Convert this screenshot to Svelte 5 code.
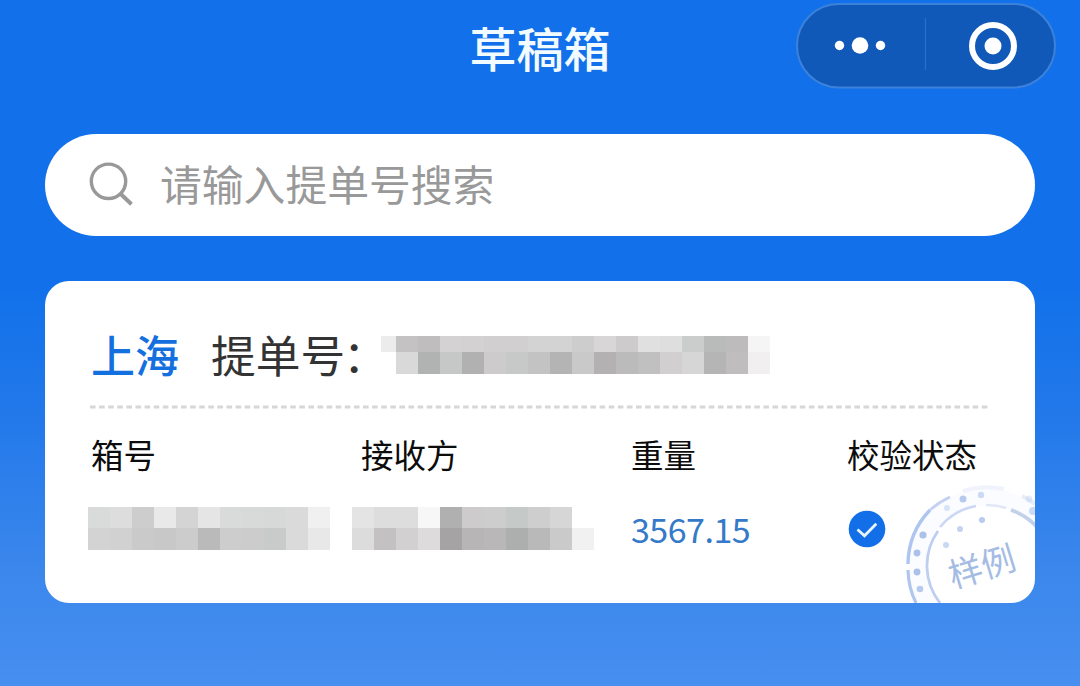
<script>
  let keyword = $state('');

  const billNo = [
    { h: 16, cells: ['#ececec', '#c4c2c3', '#bfbdbe', '#d4d2d3', '#d3d1d2', '#d1cfcf', '#d1cfd0', '#d3d3d3', '#d3d3d3', '#cecdce', '#d8d6d7', '#cdcbcc', '#e0e0e0', '#dedede', '#cbcccc', '#b9bbbb', '#bdbbbc', '#f6f5f6'] },
    { h: 22, cells: ['#fff', '#dad9da', '#b1b3b2', '#c6c7c7', '#b1b1b1', '#cdcbcc', '#c7c8c8', '#c4c3c4', '#b5b4b5', '#cac9ca', '#b3b1b2', '#bcbbbc', '#c1c0c1', '#d2cfd0', '#d6d6d6', '#b5b5b5', '#bfbdbe', '#f1eff0'] }
  ];
  const boxNo = [
    { h: 21, cells: ['#d9dbda', '#dddddd', '#cdcdcd', '#e9e9e9', '#d4d4d4', '#e5e5e5', '#d9dbda', '#d7dad9', '#d6d9d8', '#dadada', '#f0f0f0'] },
    { h: 22, cells: ['#d3d3d3', '#d1d1d1', '#cacaca', '#c8c8c8', '#cccccc', '#bababa', '#cdcdcd', '#cccccc', '#c8cbca', '#dadada', '#e8e8e8'] }
  ];
  const receiver = [
    { h: 21, cells: ['#e4e4e4', '#dddddd', '#dddddd', '#f7f7f7', '#b0b0b0', '#cdcbcc', '#cecdce', '#c5c9c8', '#cecece', '#d6d6d6', '#fff'] },
    { h: 22, cells: ['#dcdcdc', '#c3c1c2', '#d2d0d1', '#dddbdc', '#a5a3a4', '#b8b5b6', '#b9b7b8', '#adaeae', '#b9b9b9', '#cacaca', '#f1f1f1'] }
  ];

  // [x, y, r, opacity]
  const stampDots = [
    [43, 64, 3.6, 0.7], [37, 82, 3.4, 0.7], [37, 101, 3.4, 0.7], [40, 118, 3.3, 0.6],
    [67, 37, 3, 0.3], [83, 28, 3.5, 0.6], [101, 24, 3.2, 0.4], [149, 28, 3.4, 0.2],
    [153, 40, 4, 0.4], [66, 74, 3, 0.45], [80, 58, 3, 0.5], [102, 49, 3, 0.6]
  ];
</script>

{#snippet mosaic(rows, lead)}
  <div class="mosaic">
    {#each rows as row}
      <div class="mosaic-row" style="height:{row.h}px">
        {#each row.cells as color, i}
          <i style="width:{i === 0 ? lead : 22}px;background:{color}"></i>
        {/each}
      </div>
    {/each}
  </div>
{/snippet}

<div class="page">
  <header>
    <h1>草稿箱</h1>
    <div class="capsule">
      <svg width="260" height="86" viewBox="0 0 260 86">
        <rect x="1" y="1" width="258" height="83.5" rx="41.7" fill="#1059b8" stroke="#3c82da" stroke-width="2" />
        <circle cx="43.5" cy="42.5" r="4.7" fill="#fff" />
        <circle cx="64" cy="42.5" r="8.3" fill="#fff" />
        <circle cx="84.5" cy="42.5" r="4.7" fill="#fff" />
        <path d="M129.5 15v52" stroke="#2b6fc9" stroke-width="1.2" />
        <circle cx="197" cy="43" r="21" fill="none" stroke="#fff" stroke-width="6" />
        <circle cx="197" cy="43" r="8.5" fill="#fff" />
      </svg>
    </div>
  </header>

  <label class="search">
    <svg width="46" height="46" viewBox="0 0 46 46" fill="none" stroke="#999" stroke-width="3.4">
      <circle cx="19.5" cy="19.3" r="17.2" />
      <path d="M31.5 31.8 42.5 42.3" stroke-width="4" />
    </svg>
    <input bind:value={keyword} placeholder="请输入提单号搜索" />
  </label>

  <section class="card">
    <div class="bill">
      <span class="city">上海</span>
      <span class="label">提单号<span class="colon">：</span></span>
      {@render mosaic(billNo, 15)}
    </div>
    <svg class="divider" width="901" height="4" viewBox="0 0 901 4">
      <path d="M1 2H901" stroke="#d8d6d7" stroke-width="2.8" stroke-dasharray="5.6 3.5" />
    </svg>
    <div class="table">
      <span class="th">箱号</span>
      <span class="th">接收方</span>
      <span class="th">重量</span>
      <span class="th">校验状态</span>
      <div class="td box">{@render mosaic(boxNo, 22)}</div>
      <div class="td receiver">{@render mosaic(receiver, 22)}</div>
      <div class="td weight">3567.15</div>
      <div class="td status">
        <svg width="38" height="38" viewBox="0 0 38 38">
          <circle cx="19" cy="19" r="18.3" fill="#136fe8" />
          <path d="M9.5 19.5 16.5 25.8 28.3 13.8" fill="none" stroke="#e8f5ff" stroke-width="2.8" />
        </svg>
      </div>
    </div>

    <svg class="stamp" width="155" height="132" viewBox="0 0 155 132">
      <g fill="none">
        <circle cx="106" cy="95" r="69" stroke="#fafcff" stroke-width="17" />
        <path d="M36 132A79 79 0 0 1 28 99" stroke="#b0c6ee" stroke-width="3.2" />
        <path d="M28 93A79 79 0 0 1 50 39" stroke="#aec5f1" stroke-width="3.4" />
        <path d="M50 39A79 79 0 0 1 70 26" stroke="#c4d1f2" stroke-width="2.8" />
        <path d="M83 20A79 79 0 0 1 124 18" stroke="#f0f3fc" stroke-width="4" />
        <path d="M142 25A79 79 0 0 1 155 33" stroke="#e6eef8" stroke-width="4" />
        <path d="M60 132A60 60 0 0 1 58 60" stroke="#bfcef0" stroke-width="2.8" />
        <path d="M60 56A60 60 0 0 1 96 35" stroke="#ccd7f3" stroke-width="2.6" />
        <path d="M106 34A61 61 0 0 1 126 37" stroke="#e2e7f6" stroke-width="2.4" />
        <path d="M131 39A62 62 0 0 1 157 56" stroke="#c3d0e9" stroke-width="3.6" />
      </g>
      {#each stampDots as [x, y, r, o]}
        <circle cx={x} cy={y} {r} fill="#8aa8e0" opacity={o} />
      {/each}
      <text x="102" y="108" text-anchor="middle" transform="rotate(-17 102 96)">样例</text>
    </svg>
  </section>
</div>

<style>
  :global(body) {
    margin: 0;
  }
  .page {
    box-sizing: border-box;
    width: 1080px;
    height: 686px;
    padding: 0 45px;
    overflow: hidden;
    background: linear-gradient(#1271ea 0, #1271ea 290px, #2379ea 420px, #3b87ec 570px, #478ff0 686px);
    font-family: "Noto Sans CJK SC", sans-serif;
  }
  header {
    position: relative;
    height: 134px;
  }
  h1 {
    margin: 0;
    padding-top: 12px;
    line-height: 70px;
    font-size: 47px;
    font-weight: 500;
    text-align: center;
    color: #f2fbff;
  }
  .capsule {
    position: absolute;
    top: 3px;
    right: -21px;
  }
  .capsule svg {
    display: block;
  }
  .search {
    box-sizing: border-box;
    display: flex;
    align-items: center;
    gap: 25px;
    height: 102px;
    padding: 0 44px;
    border-radius: 51px;
    background: #fff;
  }
  input {
    flex: 1;
    height: 70px;
    padding: 0 0 4px;
    border: 0;
    outline: 0;
    box-sizing: border-box;
    background: none;
    font: 400 41.8px "Noto Sans CJK SC", sans-serif;
    color: #333;
  }
  input::placeholder {
    color: #999;
    opacity: 1;
  }
  .card {
    position: relative;
    box-sizing: border-box;
    height: 322px;
    margin-top: 45px;
    padding: 40px 44px 0;
    border-radius: 24px;
    overflow: hidden;
    background: #fff;
  }
  .bill {
    display: flex;
    align-items: center;
    height: 66px;
    padding-left: 2px;
    font-size: 44.7px;
    line-height: 66px;
  }
  .city {
    width: 120px;
    font-weight: 500;
    font-size: 44px;
    color: #146fdf;
  }
  .label {
    width: 170px;
    white-space: nowrap;
    color: #333;
  }
  .colon {
    margin-left: -2px;
  }
  .bill .mosaic {
    padding-top: 2px;
  }
  .mosaic-row {
    display: flex;
  }
  .mosaic-row i {
    flex: none;
  }
  .divider {
    display: block;
    margin-top: 18px;
  }
  .table {
    display: grid;
    grid-template-columns: 270px 270px 216px 1fr;
    grid-template-rows: 48px 43px;
    row-gap: 29px;
    margin-top: 21px;
    padding-left: 2px;
  }
  .th {
    font-size: 32.5px;
    line-height: 48px;
    color: #0c0c0c;
    white-space: nowrap;
  }
  .td {
    display: flex;
    align-items: center;
  }
  .box {
    margin-left: -3px;
  }
  .receiver {
    margin-left: -9px;
  }
  .weight {
    font-size: 34px;
    letter-spacing: -0.5px;
    line-height: 43px;
    color: #3579c9;
  }
  .status {
    padding-left: 1px;
  }
  .stamp {
    position: absolute;
    right: 0;
    bottom: 0;
  }
  .stamp text {
    font-size: 34px;
    fill: #a4bce3;
  }
</style>
